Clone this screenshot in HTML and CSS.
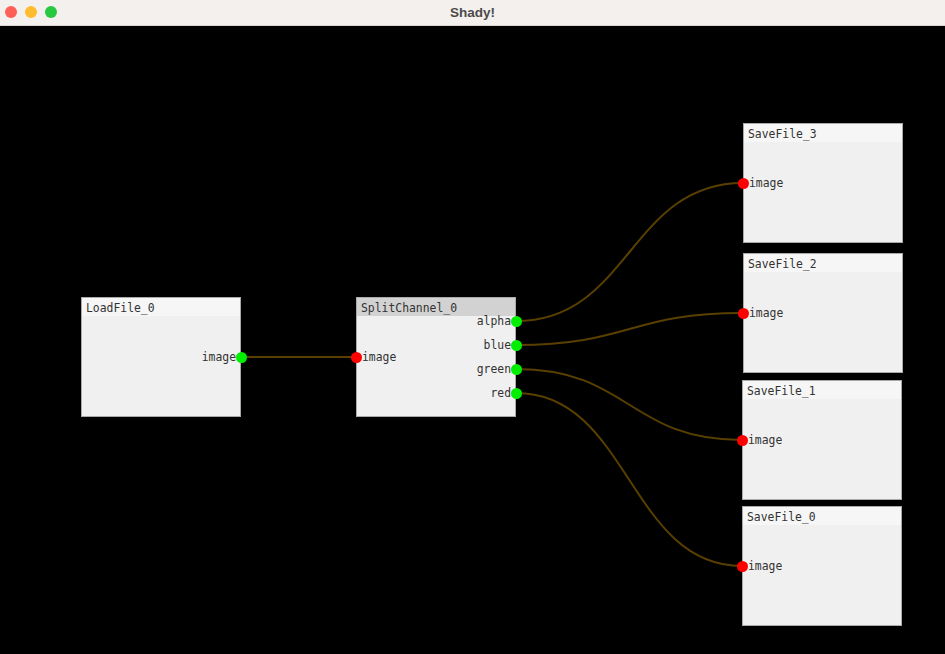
FILE: index.html
```html
<!DOCTYPE html>
<html>
<head>
<meta charset="utf-8">
<title>Shady!</title>
<link rel="stylesheet" href="styles.css">
</head>
<body>
<div class="window">
  <header class="titlebar">
    <div class="lights">
      <span class="light red"></span>
      <span class="light yellow"></span>
      <span class="light green"></span>
    </div>
    <div class="title">Shady!</div>
  </header>
  <main class="canvas">
    <svg class="wires" width="945" height="628" viewBox="0 0 945 628">
      <g fill="none" stroke="#5a4000" stroke-width="2">
        <path d="M241 331 L356 331"/>
        <path d="M516 295 C629.5 295 629.5 157 743 157"/>
        <path d="M516 319 C629.5 319 629.5 287 743 287"/>
        <path d="M516 343 C629 343 629 414 742 414"/>
        <path d="M516 367 C629 367 629 540 742 540"/>
      </g>
    </svg>

    <div class="node" style="left:81px;top:271px">
      <div class="node-head">LoadFile_0</div>
      <div class="port out" style="top:60px"><span class="label">image</span><span class="dot on"></span></div>
    </div>

    <div class="node selected" style="left:356px;top:271px">
      <div class="node-head">SplitChannel_0</div>
      <div class="port in" style="top:60px"><span class="dot off"></span><span class="label">image</span></div>
      <div class="port out" style="top:24px"><span class="label">alpha</span><span class="dot on"></span></div>
      <div class="port out" style="top:48px"><span class="label">blue</span><span class="dot on"></span></div>
      <div class="port out" style="top:72px"><span class="label">green</span><span class="dot on"></span></div>
      <div class="port out" style="top:96px"><span class="label">red</span><span class="dot on"></span></div>
    </div>

    <div class="node" style="left:743px;top:97px">
      <div class="node-head">SaveFile_3</div>
      <div class="port in" style="top:60px"><span class="dot off"></span><span class="label">image</span></div>
    </div>

    <div class="node" style="left:743px;top:227px">
      <div class="node-head">SaveFile_2</div>
      <div class="port in" style="top:60px"><span class="dot off"></span><span class="label">image</span></div>
    </div>

    <div class="node" style="left:742px;top:354px">
      <div class="node-head">SaveFile_1</div>
      <div class="port in" style="top:60px"><span class="dot off"></span><span class="label">image</span></div>
    </div>

    <div class="node" style="left:742px;top:480px">
      <div class="node-head">SaveFile_0</div>
      <div class="port in" style="top:60px"><span class="dot off"></span><span class="label">image</span></div>
    </div>
  </main>
</div>
</body>
</html>
```

FILE: styles.css
```css
html, body {
  margin: 0;
  padding: 0;
  width: 945px;
  height: 654px;
  overflow: hidden;
  background: #000;
}

.window {
  display: flex;
  flex-direction: column;
  width: 945px;
  height: 654px;
}

.titlebar {
  position: relative;
  height: 26px;
  flex: 0 0 26px;
  background: #f3f0ed;
  display: flex;
  align-items: center;
  justify-content: center;
  box-sizing: border-box;
  border-bottom: 1px solid #d8d5d2;
}

.lights {
  position: absolute;
  left: 5px;
  top: 6px;
  display: flex;
  gap: 8px;
}

.light {
  width: 12px;
  height: 12px;
  border-radius: 50%;
  display: block;
}
.light.red { background: #fe5f57; }
.light.yellow { background: #febc2e; }
.light.green { background: #28c840; }

.title {
  font-family: "Liberation Sans", Arial, sans-serif;
  font-weight: bold;
  font-size: 13.5px;
  color: #4b4b4b;
}

.canvas {
  position: relative;
  flex: 1;
  background: #000;
  overflow: hidden;
}

.wires {
  position: absolute;
  left: 0;
  top: 0;
}

.node {
  position: absolute;
  width: 160px;
  height: 120px;
  box-sizing: border-box;
  background: #f0f0f0;
  border: 1px solid #a9a9a9;
  font-family: "DejaVu Sans Mono", "Liberation Mono", monospace;
  font-size: 11.4px;
  color: #333;
}

.node-head {
  height: 18px;
  line-height: 20px;
  padding-left: 4px;
  background: #f6f6f6;
}

.node.selected .node-head {
  background: #d2d2d2;
}

.port {
  position: absolute;
  display: flex;
  align-items: center;
  height: 14px;
  margin-top: -8px;
  line-height: 16px;
}

.port.out {
  right: -7px;
}

.port.in {
  left: -6px;
}

.dot {
  width: 11px;
  height: 11px;
  border-radius: 50%;
  display: block;
}
.dot.on { background: #00ee00; }
.dot.off { background: #ff0000; }
```
